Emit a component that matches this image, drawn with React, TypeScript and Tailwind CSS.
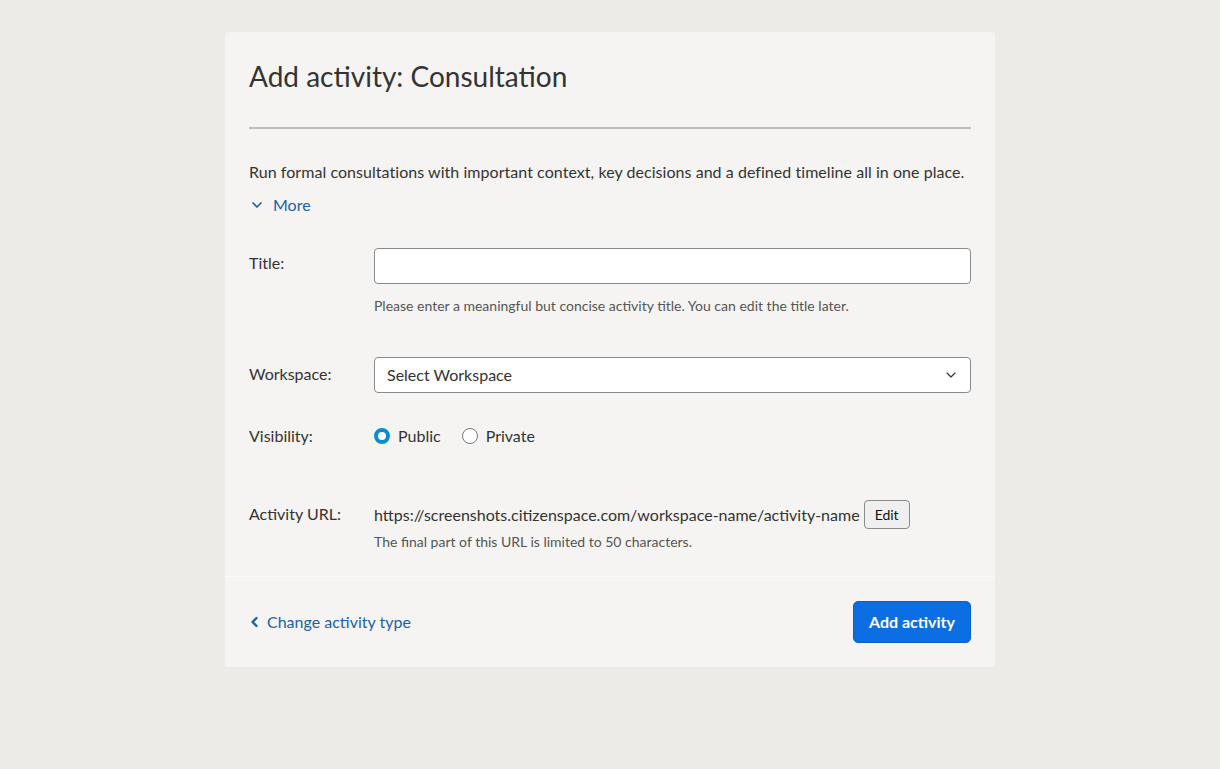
import { ChevronDown } from "lucide-react";

const Label = ({ children }: { children: React.ReactNode }) => (
  <div className="text-[16px] text-[#333333]">{children}</div>
);

export default function App() {
  return (
    <div
      className="min-h-[769px] bg-[#edebe7] pt-8"
      style={{ fontFamily: "Lato, 'Noto Sans', sans-serif" }}
    >
      <div className="mx-auto w-[770px] rounded-[4px] bg-[#f5f4f2]">
        {/* Body */}
        <div className="px-6 pt-[26px] pb-[24px]">
          <h1 className="text-[28px] leading-[36px] text-[#333333]">Add activity: Consultation</h1>
          <div className="mt-[33px] h-[2px] bg-[#bdbdbc]" />

          <p className="mt-[31px] text-[16px] leading-6 tracking-[0.003em] text-[#333333]">
            Run formal consultations with important context, key decisions and a defined timeline all in one place.
          </p>
          <button className="mt-[9px] flex items-center gap-[8px] text-[16px] leading-6 text-[#1a62a6]">
            <ChevronDown className="h-4 w-4" strokeWidth={2.5} />
            More
          </button>

          <div className="mt-[31px] grid grid-cols-[125px_1fr]">
            {/* Title */}
            <div className="pt-[3px]">
              <Label>Title:</Label>
            </div>
            <div>
              <input className="block h-9 w-full rounded-[4px] border border-[#8a8a8a] bg-white px-3 text-[16px] outline-none" />
              <p className="mt-[12px] text-[14px] leading-5 text-[#555555]">
                Please enter a meaningful but concise activity title. You can edit the title later.
              </p>
            </div>

            {/* Workspace */}
            <div className="mt-[41px] pt-[5px]">
              <Label>Workspace:</Label>
            </div>
            <div className="mt-[41px]">
              <div className="flex h-9 w-full items-center justify-between rounded-[4px] border border-[#8a8a8a] bg-white pl-3 pr-[11px] text-[16px] text-[#333333]">
                <span>Select Workspace</span>
                <ChevronDown className="h-4 w-4 text-[#333333]" strokeWidth={1.75} />
              </div>
            </div>

            {/* Visibility */}
            <div className="mt-[31px]">
              <Label>Visibility:</Label>
            </div>
            <div className="mt-[31px] flex items-center gap-[21px] text-[16px] leading-6 text-[#333333]">
              <label className="flex items-center gap-2">
                <span className="block h-4 w-4 rounded-full border-[4.5px] border-[#0a8bd6] bg-white" />
                Public
              </label>
              <label className="flex items-center gap-2">
                <span className="block h-4 w-4 rounded-full border border-[#777777] bg-white" />
                Private
              </label>
            </div>

            {/* Activity URL */}
            <div className="mt-[54px]">
              <Label>Activity URL:</Label>
            </div>
            <div className="mt-[52px]">
              <div className="flex items-center gap-1 text-[16px] text-[#333333]">
                <span>https://screenshots.citizenspace.com/workspace-name/activity-name</span>
                <button className="h-[29px] rounded-[4px] border border-[#8a8a8a] bg-[#efefef] px-[10px] text-[14px] text-[#111111]">
                  Edit
                </button>
              </div>
              <p className="mt-[3px] text-[14px] leading-5 text-[#555555]">
                The final part of this URL is limited to 50 characters.
              </p>
            </div>
          </div>
        </div>

        {/* Footer */}
        <div className="flex items-center justify-between border-t border-[#fbfaf9] px-6 py-6">
          <a className="flex items-center gap-[6px] text-[16px] text-[#1a62a6]">
            <svg viewBox="0 0 12 12" className="h-3 w-3" fill="none" stroke="currentColor" strokeWidth={2.4} strokeLinecap="round" strokeLinejoin="round">
              <path d="M7.5 2 L3.5 6 L7.5 10" />
            </svg>
            Change activity type
          </a>
          <button className="h-[42px] rounded-[5px] border border-[#0a5fc9] bg-[#0b6fe3] px-[15px] text-[16px] font-bold text-white">
            Add activity
          </button>
        </div>
      </div>
    </div>
  );
}
